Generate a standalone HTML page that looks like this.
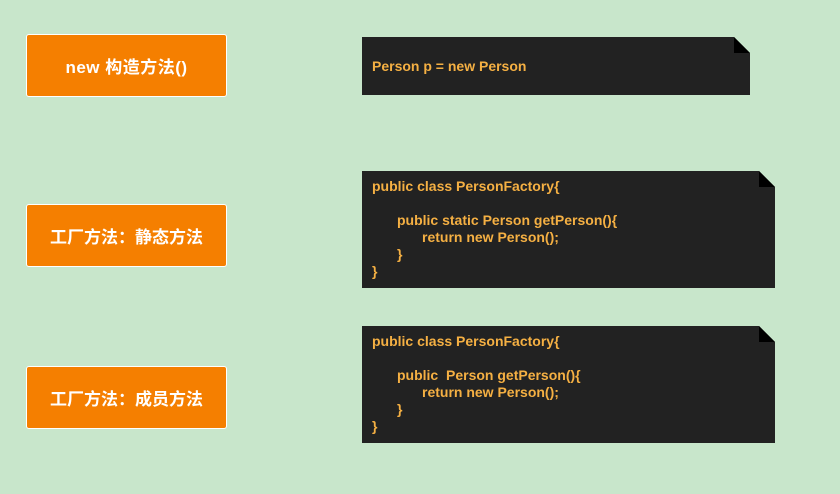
<!DOCTYPE html>
<html><head><meta charset="utf-8"><style>
body{margin:0;width:840px;height:494px;background:#c8e6cb;position:relative;overflow:hidden;font-family:"Liberation Sans","Noto Sans CJK SC",sans-serif;}
.btn{position:absolute;left:26px;width:199px;height:61px;background:#f57f00;border:1.5px solid #fff;border-radius:3px;color:#fff;font-weight:bold;font-size:17px;display:flex;align-items:center;justify-content:center;}
.note{position:absolute;}
.note svg{position:absolute;left:0;top:0}
.code{position:absolute;left:10px;color:#f5b043;font-weight:bold;font-size:14px;line-height:17px;white-space:pre;}
.code div{height:17px}
.i1{padding-left:25px}.i2{padding-left:50px}
</style></head><body>
<div class="btn" style="top:34px;font-size:17px;letter-spacing:0.5px">new 构造方法()</div>
<div class="btn" style="top:204px">工厂方法：静态方法</div>
<div class="btn" style="top:366px">工厂方法：成员方法</div>

<div class="note" style="left:362px;top:37px;width:388px;height:58px">
<svg width="388" height="58"><polygon points="0,0 372,0 388,16 388,58 0,58" fill="#222"/><polygon points="372,0 372,16 388,16" fill="#000"/></svg>
<div class="code" style="top:21px">Person p = new Person</div></div>

<div class="note" style="left:362px;top:171px;width:413px;height:117px">
<svg width="413" height="117"><polygon points="0,0 397,0 413,16 413,117 0,117" fill="#222"/><polygon points="397,0 397,16 413,16" fill="#000"/></svg>
<div class="code" style="top:7px"><div>public class PersonFactory{</div><div></div><div class="i1">public static Person getPerson(){</div><div class="i2">return new Person();</div><div class="i1">}</div><div>}</div></div></div>

<div class="note" style="left:362px;top:326px;width:413px;height:117px">
<svg width="413" height="117"><polygon points="0,0 397,0 413,16 413,117 0,117" fill="#222"/><polygon points="397,0 397,16 413,16" fill="#000"/></svg>
<div class="code" style="top:7px"><div>public class PersonFactory{</div><div></div><div class="i1">public  Person getPerson(){</div><div class="i2">return new Person();</div><div class="i1">}</div><div>}</div></div></div>
</body></html>
